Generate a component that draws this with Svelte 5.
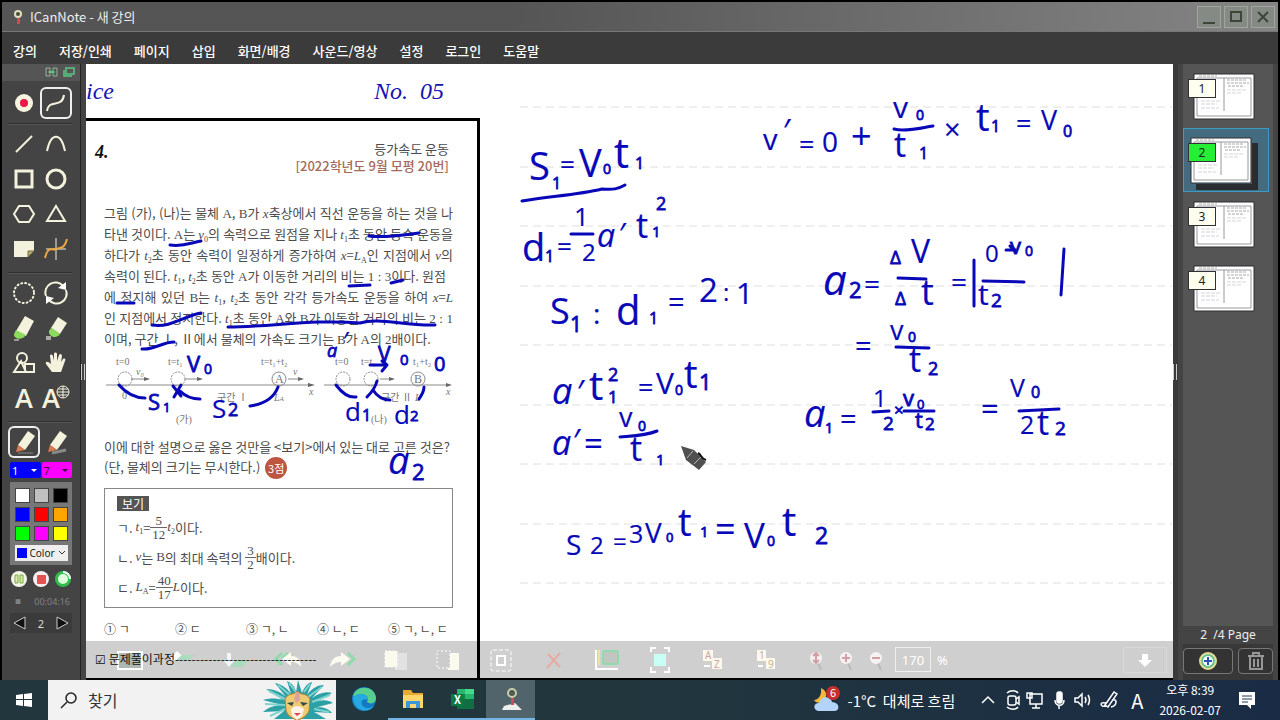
<script lang="ts">
  type Ink = [string, number, number, number];

  const menus = ["강의", "저장/인쇄", "페이지", "삽입", "화면/배경", "사운드/영상", "설정", "로그인", "도움말"];

  const cream = "#f4f2dc";

  const drawTools = [
    { label: "직선", art: `<path d="M8 24 24 8"/>` },
    { label: "곡선", art: `<path d="M7 23C11 4 21 4 25 23"/>` },
    { label: "사각형", art: `<path d="M8 8H24V24H8Z" stroke-width="3"/>` },
    { label: "원", art: `<circle cx="16" cy="16" r="9" stroke-width="3"/>` },
    { label: "육각형", art: `<path d="M11 8H21L26 16 21 24H11L6 16Z"/>` },
    { label: "삼각형", art: `<path d="M16 8 25 23H7Z"/>` },
    { label: "메모", art: `<path d="M6 8H26V18L20 24H6Z" fill="${cream}" stroke="none"/><path d="M20 24V18H26Z" fill="#b9ab6a" stroke="#716b45" stroke-width="1"/>` },
    { label: "그래프", art: `<path d="M6 16H26M16 5V27" stroke-width="1"/><path d="M5 25C8 12 12 18 16 16S24 17 27 6" stroke="#eda73f"/>` }
  ];

  const editTools = [
    { label: "영역 선택", art: `<circle cx="16" cy="16" r="10" stroke-width="2" stroke-dasharray="1 3" stroke-linecap="round"/>` },
    { label: "회전", art: `<path d="M6 19A10 10 0 0 1 23 9M26 13A10 10 0 0 1 9 23"/><path d="M18 11 26 13 26 5ZM14 21 6 19 6 27Z" fill="#fff" stroke="none"/>` },
    { label: "지우개", art: `<path d="M17 4 26 9 18 24 8 19Z" fill="${cream}" stroke="none"/><path d="M8 18 18 23C13 30 5 26 6 22Z" fill="#8bdc5b" stroke="none"/><path d="M6 28H11" stroke-width="1"/>` },
    { label: "부분 지우개", art: `<path d="M18 5 27 11 20 22 11 16Z" fill="${cream}" stroke="none"/><path d="M11 16 20 22C16 28 8 24 9 19Z" fill="#8bdc5b" stroke="none"/><path d="M6 24H11V28H6Z" fill="#aaa" stroke="none"/>` },
    { label: "도형", art: `<circle cx="14" cy="11" r="5"/><path d="M6 25 13 14 18 25ZM17 17H26V25H17Z"/>` },
    { label: "손", art: `<path d="M12 25 6 17C5 14 8 14 11 17L10 9C10 7 12 7 13 9L14 14 14 7C14 5 17 5 17 7V14L19 8C20 6 22 7 22 9L21 15 23 12C25 11 26 12 25 14L21 25Z" fill="${cream}" stroke="none"/>` }
  ];

  const swatches = ["#ffffff", "#c0c0c0", "#000000", "#0000ff", "#ff0000", "#ffa500", "#00ff00", "#ff00ff", "#ffff00"];

  const boardTools = [
    { label: "화면", art: `<path d="M4 8H28V25H4Z" fill="#aeb8b2" stroke="#fff" stroke-width="2"/>` },
    { label: "위로", art: `<path d="M4 13 10 7 16 13V16H4Z" fill="#fff"/><path d="M15 11H27L20 17H8Z" fill="#a9dcbc"/>` },
    { label: "아래로", art: `<path d="M7 9H11V17H14L9 23 4 17H7Z" fill="#f5f5f5"/><path d="M16 16H28L22 23H10Z" fill="#a9dcbc"/>` },
    { label: "실행 취소", art: `<path d="M9 9 3 15 9 21M15 9 9 15" fill="none" stroke="#8fdcaa" stroke-width="3"/><path d="M9 15 18 8V12C25 12 28 16 28 23 25 19 22 18 18 18V22Z" fill="#fbfbf2"/>` },
    { label: "다시 실행", art: `<path d="M22 9 28 15 22 21" fill="none" stroke="#8fdcaa" stroke-width="3"/><path d="M24 15 15 8V12C8 12 5 16 4 23 8 19 11 18 15 18V22Z" fill="#fbfbf2"/>` },
    { label: "앞으로", art: `<path d="M16 9H28V26H16Z" fill="#e2e2e2"/><path d="M6 7H18V23H6Z" fill="#fafaed" stroke="#fff" stroke-dasharray="2 2"/>` },
    { label: "뒤로", art: `<path d="M16 9H27V26H16Z" fill="#fafaed"/><path d="M5 7H18V24H5Z" fill="#ccc" stroke="#fff" stroke-dasharray="2 2"/>` },
    { label: "선택", art: `<rect x="6" y="6" width="20" height="21" rx="2" fill="none" stroke="#fff" stroke-dasharray="4 2"/><path d="M12 12H20V21H12Z" fill="none" stroke="#fff" stroke-width="2"/>` },
    { label: "삭제", art: `<path d="M10 10 22 23M22 9 9 24" stroke="#e8aaa2" stroke-width="2"/>` },
    { label: "배열", art: `<path d="M5 6V25H27" fill="none" stroke="#fff" stroke-width="2"/><path d="M8 6V21" stroke="#f2dfa5" stroke-width="2"/><rect x="12" y="7" width="15" height="13" rx="2" fill="#c1c6c2" stroke="#8fdcaa" stroke-width="2"/>` },
    { label: "맞춤", art: `<path d="M7 8V4H12M20 4H25V8M25 23V28H20M12 28H7V23" fill="none" stroke="#fff" stroke-width="2"/><path d="M10 10H22V22H10Z" fill="#c9fff5"/>` },
    { label: "글자 순서", art: `<path d="M6 6H16V17H6ZM15 14H25V25H15Z" fill="#fff9ed"/><text x="8" y="15" font-size="10" fill="#c9a6a6">A</text><text x="17" y="24" font-size="10" fill="#c9a6a6">Z</text><path d="M7 22H13" stroke="#fff" stroke-width="2"/>` },
    { label: "숫자 순서", art: `<path d="M7 6H16V17H7ZM16 14H25V25H16Z" fill="#fff9ed"/><text x="9" y="15" font-size="10" fill="#bbb39b">1</text><text x="18" y="24" font-size="10" fill="#bbb39b">9</text><path d="M8 22H13" stroke="#fff" stroke-width="2"/>` }
  ];

  const zoomTools = [
    { label: "높이 맞춤", mark: "M15 9V19M12 12 15 9 18 12M12 16 15 19 18 16" },
    { label: "확대", mark: "M11 14H19M15 10V18" },
    { label: "축소", mark: "M11 14H19" }
  ];

  const pages = [1, 2, 3, 4];
  let current = $state(2);

  const rules = [107, 167, 226, 286, 345, 405, 464, 524, 583, 643];

  // Each entry is text, left edge, baseline and size on the board.
  const notes: Ink[] = [
    ["S", 529, 180, 38], ["1", 552, 189, 16], ["=", 560, 174, 26], ["V", 579, 177, 38], ["0", 603, 174, 14], ["t", 614, 168, 42], ["1", 635, 169, 16],
    ["d", 522, 261, 38], ["1", 545, 262, 16], ["=", 557, 256, 26], ["1", 574, 226, 26], ["2", 582, 261, 24], ["a", 597, 247, 32], ["′", 618, 244, 30], ["t", 636, 238, 34], ["1", 652, 237, 15], ["2", 656, 210, 18],
    ["S", 550, 324, 36], ["1", 570, 332, 21], [":", 593, 324, 28], ["d", 616, 325, 40], ["1", 649, 324, 16], ["=", 668, 312, 29], ["2", 699, 302, 33], [":", 723, 301, 24], ["1", 736, 304, 30],
    ["a", 552, 404, 36], ["′", 576, 404, 32], ["t", 589, 400, 40], ["1", 608, 403, 17], ["2", 608, 381, 18], ["=", 638, 397, 27], ["V", 656, 394, 30], ["0", 675, 395, 14], ["t", 684, 388, 38], ["1", 699, 390, 22],
    ["a", 552, 455, 34], ["′", 572, 453, 32], ["=", 584, 455, 33], ["v", 619, 427, 27], ["0", 638, 431, 14], ["t", 630, 461, 34], ["1", 656, 465, 15],
    ["S", 566, 555, 28], ["2", 590, 554, 24], ["=", 613, 550, 24], ["3", 629, 543, 25], ["V", 645, 543, 28], ["0", 666, 542, 13], ["t", 678, 536, 38], ["1", 700, 537, 15], ["=", 715, 542, 36], ["V", 744, 548, 35], ["0", 767, 546, 14], ["t", 782, 536, 40], ["2", 815, 544, 23],
    ["v", 763, 150, 29], ["′", 782, 143, 32], ["=", 799, 154, 27], ["0", 822, 152, 28], ["+", 851, 149, 36], ["v", 893, 118, 30], ["0", 916, 120, 14], ["t", 894, 157, 34], ["1", 919, 159, 16], ["×", 944, 140, 29], ["t", 976, 131, 38], ["1", 991, 132, 16], ["=", 1016, 133, 27], ["V", 1041, 130, 27], ["0", 1063, 137, 16],
    ["a", 823, 295, 42], ["2", 849, 298, 22], ["=", 864, 294, 28], ["Δ", 890, 264, 19], ["V", 911, 263, 32], ["Δ", 895, 305, 19], ["t", 921, 305, 36], ["=", 951, 292, 28], ["0", 985, 262, 24], ["v", 1010, 254, 22], ["0", 1025, 256, 14], ["t", 978, 305, 30], ["2", 991, 307, 19],
    ["=", 855, 356, 29], ["v", 890, 340, 27], ["0", 908, 342, 14], ["t", 909, 372, 34], ["2", 928, 375, 18],
    ["a", 804, 427, 38], ["1", 825, 433, 14], ["=", 840, 429, 29], ["1", 873, 407, 24], ["2", 883, 430, 19], ["×", 894, 416, 17], ["v", 903, 406, 22], ["0", 917, 409, 13], ["t", 915, 428, 22], ["2", 925, 430, 17],
    ["=", 981, 420, 31], ["V", 1010, 397, 25], ["0", 1031, 398, 16], ["2", 1020, 434, 25], ["t", 1037, 435, 34], ["2", 1055, 435, 19],
    ["V", 187, 372, 22], ["0", 204, 374, 14], ["S", 148, 410, 22], ["1", 163, 412, 13], ["S", 212, 418, 26], ["2", 228, 416, 18],
    ["a", 327, 357, 18], ["′", 342, 350, 26], ["V", 378, 362, 21], ["0", 400, 365, 15], ["0", 434, 371, 20], ["d", 345, 421, 26], ["1", 362, 421, 16], ["d", 394, 424, 26], ["2", 410, 421, 15], ["a", 388, 474, 38], ["2", 412, 480, 22]
  ];

  const strokes = [
    "M522 201C552 196 577 195 602 189 613 190 618 189 625 185",
    "M571 234H593", "M620 437C632 436 645 436 657 431", "M894 129C906 132 920 128 933 126",
    "M898 278 926 279", "M974 260V306", "M983 281 1024 282", "M1064 249 1061 295", "M1006 250H1014M1010 246 1015 250",
    "M896 347 929 348", "M873 412 889 411", "M904 411H934", "M1019 411 1059 409",
    "M170 245C183 247 190 243 201 241", "M369 236C387 238 402 235 419 233", "M349 286 370 285", "M391 283 403 280",
    "M117 303 134 303", "M152 325C171 328 184 316 201 313", "M228 327C270 327 315 319 360 323 379 317 404 326 435 325", "M142 349C155 350 162 342 174 342",
    "M119 385C126 393 135 398 145 398", "M173 386 181 396M181 385 174 397M180 391C186 397 193 399 200 399", "M250 406C264 404 274 398 278 387",
    "M370 365H386M382 361 387 365 382 371", "M336 385C342 393 348 398 356 397", "M377 381C375 389 371 393 367 397M373 390C378 398 384 400 390 400", "M424 387C424 392 421 396 419 399"
  ];
</script>

<div class="window">
  <header class="titlebar">
    <svg width="12" height="16" viewBox="0 0 12 16"><circle cx="6" cy="5" r="3" fill="#454b35" stroke="#dedfbd" stroke-width="2" /><path d="M5 9H8V15H5Z" fill="#d44a4f" /></svg>
    <h1>ICanNote - 새 강의</h1>
    <div class="titlebar__buttons">
      <button type="button" aria-label="최소화"><svg width="16" height="16"><path d="M2 14H14" /></svg></button>
      <button type="button" aria-label="최대화"><svg width="16" height="16"><path d="M3 3H13V12H3Z" /></svg></button>
      <button type="button" aria-label="닫기"><svg width="16" height="16"><path d="M3 3 13 13M13 3 3 13" /></svg></button>
    </div>
  </header>

  <nav class="menubar">
    {#each menus as menu}
      <button type="button">{menu}</button>
    {/each}
  </nav>

  <main class="workspace">
    <aside class="tools">
      <div class="tools__head">
        <svg width="30" height="12" fill="none" stroke="#58c783"><path d="M1 2H5V10H1ZM8 2H12V10H8ZM3 6H10" stroke="#8eb79a" /><path d="M4 6H9" stroke-width="2" /><path d="M21 2H29V8H21ZM19 4V10H27" stroke-width="1.5" /></svg>
      </div>
      <div class="tools__body">
        <div class="tools__grid">
          <button type="button" aria-label="녹화"><svg width="32" height="32"><circle cx="16" cy="16" r="9" fill="#f7f4df" /><circle cx="16" cy="16" r="4" fill="#ea1748" /></svg></button>
          <button type="button" class="framed" aria-label="자유 곡선"><svg width="32" height="32" fill="none" stroke={cream} stroke-width="2"><path d="M7 24C9 11 22 22 24 8" /></svg></button>
        </div>
        <hr />
        <div class="tools__grid tools__grid--draw">
          {#each drawTools as tool}
            <button type="button" aria-label={tool.label}><svg width="32" height="32" fill="none" stroke={cream} stroke-width="2">{@html tool.art}</svg></button>
          {/each}
        </div>
        <hr />
        <div class="tools__grid tools__grid--draw">
          {#each editTools as tool}
            <button type="button" aria-label={tool.label}><svg width="32" height="32" fill="none" stroke={cream} stroke-width="2">{@html tool.art}</svg></button>
          {/each}
          <button type="button" class="letter" aria-label="글자">A</button>
          <button type="button" class="letter letter--web" aria-label="웹 글자">A<svg width="14" height="14" fill="#444" stroke={cream}><circle cx="7" cy="7" r="6" /><path d="M1 7H13M2 4H12M2 10H12M7 1V13" /></svg></button>
        </div>
        <hr />
        <div class="tools__grid">
          {#each ["펜", "형광펜"] as pen, i}
            <button type="button" class:framed={i === 0} aria-label={pen}><svg width="32" height="32"><path d="M20 5 27 10 17 24 10 19Z" fill={cream} /><path d="M10 19 17 24 8 26Z" fill="#dc7950" /><path d={i === 0 ? "M10 27H25" : "M12 27 26 24"} stroke="#888" stroke-width={i === 0 ? 1 : 3} /></svg></button>
          {/each}
        </div>
        <div class="widths">
          <label class="widths__pen"><select aria-label="펜 굵기"><option>1</option></select></label>
          <label class="widths__marker"><select aria-label="형광펜 굵기"><option>7</option></select></label>
        </div>
        <div class="palette">
          {#each swatches as color}
            <button type="button" aria-label={color} style:background={color}></button>
          {/each}
          <label class="palette__more"><span></span><select aria-label="Color"><option>Color</option></select><svg width="8" height="8" fill="none" stroke="#333"><path d="M1 2 4 5 7 2" /></svg></label>
        </div>
        <div class="record">
          <button type="button" aria-label="일시 정지"><svg width="18" height="18"><circle cx="9" cy="9" r="8" fill="#f4f5e9" /><path d="M5 5H8V13H5ZM10 5H13V13H10Z" fill="#d7efaa" stroke="#7caa42" /></svg></button>
          <button type="button" aria-label="정지"><svg width="18" height="18"><circle cx="9" cy="9" r="8" fill="#f8eeee" /><rect x="5" y="5" width="9" height="9" rx="1" fill="#e5534e" /></svg></button>
          <button type="button" aria-label="상태"><svg width="18" height="18"><circle cx="9" cy="9" r="8" fill="#31bd4d" /><circle cx="9" cy="9" r="5" fill="#dfffdc" /><path d="M9 2A7 7 0 0 1 16 9" stroke="#fff" stroke-width="2" fill="none" /></svg></button>
        </div>
        <div class="timer"><span>■</span><time>00:04:16</time></div>
        <div class="pager">
          <button type="button" aria-label="이전 페이지" onclick={() => (current = Math.max(1, current - 1))}><svg width="14" height="14"><path d="M12 1V13L1 7Z" /></svg></button>
          <span>{current}</span>
          <button type="button" aria-label="다음 페이지" onclick={() => (current = Math.min(4, current + 1))}><svg width="14" height="14"><path d="M2 1V13L13 7Z" /></svg></button>
        </div>
      </div>
    </aside>
    <div class="splitter"><i></i></div>

    <section class="board">
      <svg class="guides" width="100%" height="100%">
        <g transform="translate(-86 -64)" stroke="#dededb" stroke-dasharray="8 5">
          {#each rules as y}
            <line x1="520" x2="1172" y1={y} y2={y} />
          {/each}
        </g>
      </svg>

      <div class="board__bar">
        {#each boardTools as tool}
          <button type="button" class="slot" aria-label={tool.label}><svg width="32" height="32">{@html tool.art}</svg></button>
        {/each}
        <div class="zoom">
          {#each zoomTools as tool}
            <button type="button" aria-label={tool.label}><svg width="30" height="32"><path d="M17 19 20 26" stroke="#bbb" stroke-width="2" /><circle cx="15" cy="14" r="6" fill="#f6f2f2" /><path d={tool.mark} fill="none" stroke="#d29fa5" stroke-width="2" /></svg></button>
          {/each}
          <input aria-label="배율" value="170" /><span>%</span>
        </div>
        <button type="button" class="down" aria-label="도구 모음 숨기기"><svg width="16" height="16"><path d="M5 2H11V8H15L8 15 1 8H5Z" fill="#fff" /></svg></button>
      </div>

      <article class="paper">
        <div class="paper__head"><span>ice</span><span>No.&nbsp; 05</span></div>
        <div class="problem">
          <div class="problem__head">
            <b>4.</b>
            <p>등가속도 운동<strong>[2022학년도 9월 모평 20번]</strong></p>
          </div>
          <div class="passage">
            <p>그림 (가), (나)는 물체 <u>A</u>, <u>B</u>가 <i>x</i>축상에서 직선 운동을 하는 것을 나</p>
            <p>타낸 것이다. <u>A</u>는 <i>v</i><sub>0</sub>의 속력으로 원점을 지나 <i>t</i><sub>1</sub>초 동안 등속 운동을</p>
            <p>하다가 <i>t</i><sub>2</sub>초 동안 속력이 일정하게 증가하여 <i>x</i>=<i>L</i><sub>A</sub>인 지점에서 <i>v</i>의</p>
            <p class="nearly">속력이 된다. <i>t</i><sub>1</sub>, <i>t</i><sub>2</sub>초 동안 <u>A</u>가 이동한 거리의 비는 <u>1 : 3</u>이다. 원점</p>
            <p>에 정지해 있던 <u>B</u>는 <i>t</i><sub>1</sub>, <i>t</i><sub>2</sub>초 동안 각각 등가속도 운동을 하여 <i>x</i>=<i>L</i></p>
            <p>인 지점에서 정지한다. <i>t</i><sub>1</sub>초 동안 <u>A</u>와 <u>B</u>가 이동한 거리의 비는 <u>2 : 1</u></p>
            <p class="last">이며, 구간 <u>Ⅰ</u>, <u>Ⅱ</u>에서 물체의 가속도 크기는 <u>B</u>가 <u>A</u>의 <u>2</u>배이다.</p>
          </div>

          <svg class="figure" width="349" height="76" viewBox="104 354 349 76">
            <g fill="none" stroke="#8a8a8a">
              <path d="M106 386H312M324 386H449M131 380H148M185 380H201M288 380H302M380 380H393" />
              <circle cx="279" cy="380" r="7" /><circle cx="418" cy="380" r="7" />
              <g stroke-dasharray="2 1"><circle cx="125" cy="380" r="7" /><circle cx="178" cy="380" r="7" /><circle cx="343" cy="380" r="7" /><circle cx="371" cy="380" r="7" /></g>
            </g>
            <path d="M144 378 150 380 144 382ZM197 378 203 380 197 382ZM298 378 304 380 298 382ZM389 378 395 380 389 382ZM308 384 315 386 308 388ZM446 384 452 386 446 388Z" fill="#666" />
            <g class="figure__text">
              <text x="116" y="366">t=0</text><text x="168" y="366">t=t₁</text><text x="261" y="366">t=t₁+t₂</text>
              <text x="335" y="366">t=0</text><text x="361" y="366">t=t₁</text><text x="413" y="366">t₁+t₂</text>
              <text x="136" y="376" class="it">v₀</text><text x="293" y="376" class="it">v</text><text x="309" y="396" class="it">x</text><text x="446" y="396" class="it">x</text>
              <text x="122" y="400">0</text><text x="217" y="402">구간 Ⅰ</text><text x="274" y="402" class="it">L<tspan font-size="7">A</tspan></text>
              <text x="381" y="402">구간 Ⅱ</text><text x="415" y="402" class="it">L</text><text x="275" y="384" font-size="12">A</text><text x="414" y="384" font-size="12">B</text>
              <text x="176" y="424">(가)</text><text x="371" y="424">(나)</text>
            </g>
          </svg>

          <div class="question">
            <p>이에 대한 설명으로 옳은 것만을 &lt;보기&gt;에서 있는 대로 고른 것은?</p>
            <p>(단, 물체의 크기는 무시한다.) <span>3점</span></p>
          </div>

          <div class="choices">
            <h2>보기</h2>
            <p>ㄱ. <i>t</i><sub>1</sub>=<span class="frac"><span>5</span><span>12</span></span><i>t</i><sub>2</sub>이다.</p>
            <p>ㄴ. <i>v</i>는 <u>B</u>의 최대 속력의 <span class="frac"><span>3</span><span>2</span></span>배이다.</p>
            <p>ㄷ. <i>L</i><sub>A</sub>=<span class="frac"><span>40</span><span>17</span></span><i>L</i>이다.</p>
          </div>
          <div class="answers"><span>① ㄱ</span><span>② ㄷ</span><span>③ ㄱ, ㄴ</span><span>④ ㄴ, ㄷ</span><span>⑤ ㄱ, ㄴ, ㄷ</span></div>
          <p class="process">☑ 문제풀이과정----------------------------------</p>
        </div>
      </article>

      <svg class="ink" width="100%" height="100%">
        <g transform="translate(-86 -64)">
          {#each strokes as d}
            <path class="stroke" {d} />
          {/each}
          {#each notes as [text, x, y, size]}
            <text {x} {y} font-size={size} class:slanted={text === "a" || text === "′"} class:small={size < 24}>{text}</text>
          {/each}
          <path d="M681 446 694 450 706 462 699 470 686 460Z" fill="#505050" />
          <path d="M687 458 693 451M694 464 701 457" stroke="#bbb" />
          <path d="M698 453C702 455 700 458 706 460" fill="none" stroke="#111" stroke-width="2" />
        </g>
      </svg>
    </section>

    <div class="splitter splitter--right"><i></i></div>
    <aside class="pages">
      <div class="pages__list">
        {#each pages as page}
          <button type="button" class="page" class:current={page === current} aria-label={`${page} 페이지`} onclick={() => (current = page)}>
            <svg width="62" height="47" fill="none">
              <path d="M1 1H61V46H1Z" fill="#fff" stroke="#2e2e35" />
              <path d="M4 5H58M4 5V43H58V5M31 5V38" stroke="#98989c" />
              <path d="M6 3H24M34 7H54M34 10H56M35 13H50" stroke="#aaa" stroke-dasharray="3 1" />
              <path d="M8 28H27M8 31H24M34 17H54M34 20H48M8 35H26" stroke="#d5d5da" stroke-dasharray="4 1" />
            </svg>
            <span>{page}</span>
          </button>
        {/each}
      </div>
      <p>{current}&nbsp; /4 Page</p>
      <div class="pages__actions">
        <button type="button" aria-label="페이지 추가"><svg width="22" height="22"><circle cx="11" cy="11" r="8" fill="#fff" stroke="#e5db91" stroke-width="2" /><circle cx="11" cy="11" r="6" fill="none" stroke="#68c28a" stroke-width="2" /><path d="M7 11H15M11 7V15" stroke="#2753b6" stroke-width="2" /></svg></button>
        <button type="button" aria-label="페이지 삭제"><svg width="22" height="22" fill="none" stroke="#969696" stroke-width="2"><path d="M3 6H19M8 6V3H14V6M5 7V19H17V7M9 9V17M13 9V17" /></svg></button>
      </div>
    </aside>
  </main>

  <footer class="taskbar">
    <button type="button" class="start" aria-label="시작"><svg width="18" height="18" fill="#fff"><path d="M1 4 8 3V8H1ZM9 3 17 2V8H9ZM1 9H8V15L1 14ZM9 9H17V16L9 15Z" /></svg></button>
    <label class="search">
      <svg width="18" height="18" fill="none" stroke="#222" stroke-width="1.5"><circle cx="11" cy="7" r="5" /><path d="M7 11 1 17" /></svg>
      <input placeholder="찾기" aria-label="찾기" />
      <svg width="72" height="40">
        <path d="M22 31 1 32C7 27 13 25 20 25L1 20C8 18 14 18 21 20L4 9C12 9 19 12 24 17L13 3C21 5 26 9 29 14L25 1C30 3 34 8 34 13L36 0 40 13C42 7 46 3 50 2L45 15C50 8 56 5 62 5L50 18C57 13 64 11 70 13L52 23C59 19 66 20 71 23L52 28C60 26 67 29 70 33L52 32 64 39H12Z" fill="#2ba0a5" />
        <path d="M23 25 3 24M25 20 7 11M29 16 16 5M34 12 27 3M42 12 48 4M46 17 60 7M50 22 68 15M52 29 67 32M23 29 8 36" stroke="#80d4cf" stroke-width="2" />
        <path d="M23 19C27 12 31 16 35 11 39 16 44 12 48 19L47 31C45 35 41 39 35 40 29 38 25 35 24 30Z" fill="#eeca71" stroke="#b97d34" />
        <path d="M29 29C33 25 38 25 42 29L40 36 35 40 30 36Z" fill="#fff2e8" /><path d="M25 23 32 22 30 26ZM46 23 38 22 41 26Z" fill="#314a49" /><path d="M32 33H39L35 36Z" fill="#d34a48" /><path d="M34 12 37 12 38 20 35 23 32 20Z" fill="#dda19d" />
      </svg>
    </label>
    <div class="apps">
      <button type="button" aria-label="Edge"><svg width="26" height="26"><circle cx="13" cy="13" r="12" fill="#1479c5" /><path d="M2 11C3-1 24-2 25 12 25 17 20 19 16 16 20 10 11 5 2 11Z" fill="#57d08d" /><path d="M2 11C9 5 18 9 17 14 11 11 8 17 13 21 16 23 20 22 23 20 18 28 2 26 2 11Z" fill="#25a9df" /></svg></button>
      <button type="button" class="open" aria-label="탐색기"><svg width="26" height="26"><path d="M3 4H11L13 7H23V22H3Z" fill="#e6aa2e" /><path d="M3 9H23V22H3Z" fill="#ffd66b" /><path d="M6 22V15H20V22H16V18H10V22Z" fill="#3d96d9" /></svg></button>
      <button type="button" class="open" aria-label="Excel"><svg width="26" height="26"><path d="M8 3H25V23H8Z" fill="#27b66e" /><path d="M16 3H25V8H16Z" fill="#44d98d" /><path d="M8 8H16V13H8Z" fill="#168347" /><path d="M8 13H25V23H8Z" fill="#106f43" /><path d="M2 8H14V20H2Z" fill="#0c7842" /><text x="5" y="18" font-size="11" font-weight="700" fill="#fff">X</text></svg></button>
      <button type="button" class="open active" aria-label="ICanNote"><svg width="26" height="26"><path d="M6 20 17 17 24 24H4Z" fill="#eef0ed" /><circle cx="14" cy="7" r="4" fill="#4e5d54" stroke="#c9cda9" stroke-width="2" /><path d="M13 12H16V19H13Z" fill="#cb4b61" /></svg></button>
    </div>
    <div class="tray">
      <svg width="28" height="30"><path d="M8 3C9 11 5 15 1 15 4 20 14 18 13 9 13 6 10 4 8 3Z" fill="#f4b83b" /><path d="M5 26C0 25 0 18 6 18 8 10 18 11 19 17 27 17 27 26 22 26Z" fill="#b4d3f8" /><circle cx="20" cy="8" r="7" fill="#c62f2c" /><text x="17" y="12" font-size="11" fill="#fff">6</text></svg>
      <span class="weather">-1°C &nbsp;대체로 흐림</span>
      <svg class="tray__icons" width="140" height="24" fill="none" stroke="#fff" stroke-width="1.5">
        <path d="M4 15 10 9 16 15" />
        <path d="M29 5C32 2 38 2 40 5M29 19C32 22 38 22 40 19" /><rect x="30" y="8" width="8" height="9" rx="2" /><path d="M38 11 41 9V16L38 14" />
        <path d="M52 6H64V16H52ZM58 16V20M54 20H62M49 5H54V10H49Z" />
        <rect x="79" y="4" width="5" height="11" rx="2" fill="#fff" /><path d="M77 12C77 19 86 19 86 12M81 17V21" />
        <path d="M97 10H100L104 6V18L100 14H97ZM107 9Q109 12 107 15M110 7Q113 12 110 17" />
        <path d="M127 17 136 4 139 6 130 19ZM128 15C121 13 122 20 128 18M134 12C140 10 139 18 133 19" />
      </svg>
      <span class="lang">A</span>
      <time>오후 8:39<br />2026-02-07</time>
      <svg width="20" height="20"><path d="M2 2H18V15H14V19L10 15H2Z" fill="#fff" /><path d="M5 6H15M5 9H15M5 12H11" stroke="#213b4c" /></svg>
    </div>
  </footer>
</div>

<style>
  :global(body) {
    background: #000;
  }

  .window {
    box-sizing: border-box;
    display: flex;
    flex-direction: column;
    min-height: 100vh;
    padding-top: 2px;
    font-family: "Noto Sans", "Noto Sans CJK KR", sans-serif;
    font-size: 13px;
  }

  button,
  input,
  select {
    border: 0;
    border-radius: 0;
    background: none;
    color: inherit;
    font: inherit;
    padding: 0;
  }

  select {
    appearance: none;
  }

  svg {
    display: block;
    flex: none;
  }

  p,
  h1,
  h2 {
    margin: 0;
    font-size: inherit;
    font-weight: 400;
  }

  .titlebar {
    display: flex;
    align-items: center;
    gap: 6px;
    height: 29px;
    margin: 0 2px;
    padding: 0 3px 0 10px;
    background: linear-gradient(90deg, #555 40%, #858585);
    border-bottom: 1px solid #777;
    color: #eee;
    font-family: "Noto Sans CJK KR", sans-serif;
  }

  .titlebar__buttons {
    display: flex;
    gap: 3px;
    margin-left: auto;
  }

  .titlebar__buttons button {
    display: grid;
    place-items: center;
    width: 24px;
    height: 22px;
    border: 1px solid #a0a69f;
    background: #858b84;
  }

  .titlebar__buttons path {
    fill: none;
    stroke: #3c4638;
    stroke-width: 2;
  }

  .menubar {
    display: flex;
    align-items: center;
    gap: 22px;
    height: 32px;
    margin: 0 2px;
    padding: 6px 11px 0;
    box-sizing: border-box;
    background: #3b3b3b;
    color: #fff;
    font-family: "Noto Sans CJK KR", sans-serif;
    font-weight: 500;
    line-height: 20px;
  }

  .workspace {
    display: flex;
    flex: 1;
    margin: 0 2px;
  }

  .tools {
    width: 78px;
    background: #444;
    color: #ddd;
  }

  .tools__head {
    display: flex;
    justify-content: flex-end;
    height: 17px;
    padding: 2px 5px 0 0;
    box-sizing: border-box;
    background: #555;
  }

  .tools__body {
    padding: 6px 8px 0 6px;
  }

  .tools__grid {
    display: grid;
    grid-template-columns: 32px 32px;
  }

  .tools__grid--draw {
    grid-auto-rows: 35px;
  }

  .tools__grid button {
    height: 32px;
  }

  .tools .framed {
    border-radius: 6px;
    box-shadow: inset 0 0 0 2px #eee;
  }

  .tools hr {
    margin: 4px 0 3px;
    border: 0;
    border-top: 1px solid #303030;
    border-bottom: 1px solid #555;
  }

  .tools .letter {
    display: flex;
    align-items: center;
    justify-content: center;
    color: #f4f2dc;
    font-family: "Open Sans", sans-serif;
    font-size: 27px;
    font-weight: 600;
    line-height: 32px;
  }

  .letter--web svg {
    align-self: flex-start;
    margin: 3px 0 0 -4px;
  }

  .widths {
    display: grid;
    grid-template-columns: 1fr 1fr;
    gap: 1px;
    margin: 4px 0 0 2px;
    font-size: 11px;
  }

  .widths label {
    display: flex;
    align-items: center;
    height: 16px;
    padding: 0 4px 0 2px;
    border-radius: 2px;
  }

  .widths label::after {
    content: "";
    border: 3px solid transparent;
    border-top-color: currentColor;
    border-bottom: 0;
  }

  .widths select {
    flex: 1;
    min-width: 0;
  }

  .widths__pen {
    background: #00f;
    color: #fff;
  }

  .widths__marker {
    background: #f0f;
    color: #401040;
  }

  .palette {
    display: grid;
    grid-template-columns: repeat(3, 15px);
    grid-auto-rows: 15px;
    gap: 4px;
    justify-content: center;
    margin: 4px 0 0 2px;
    padding: 6px 3px 5px;
    background: #777;
  }

  .palette button {
    border: 1px solid #444;
  }

  .palette__more {
    display: flex;
    grid-column: 1 / -1;
    align-items: center;
    gap: 3px;
    height: 16px;
    padding: 0 2px;
    background: #eee;
    color: #222;
    font-size: 10px;
  }

  .palette__more span {
    flex: none;
    width: 10px;
    height: 10px;
    background: #00f;
  }

  .palette__more select {
    min-width: 0;
    flex: 1;
    margin-right: -3px;
  }

  .record {
    display: flex;
    justify-content: space-between;
    margin: 5px 0 0 2px;
  }

  .timer {
    display: flex;
    justify-content: space-between;
    margin: 6px 2px 0 7px;
    color: #7b8388;
    font-size: 9px;
    line-height: 16px;
  }

  .timer span {
    font-size: 6px;
  }

  .pager {
    display: flex;
    align-items: center;
    justify-content: space-between;
    height: 20px;
    margin: 3px 0 0 2px;
    padding: 0 3px;
    background: #3b3b3b;
    font-size: 11px;
  }

  .pager path {
    fill: #111;
    stroke: #ccc;
  }

  .splitter {
    display: grid;
    place-items: center;
    width: 6px;
    background: #444;
    box-shadow: inset 1px 0 #222;
  }

  .splitter i {
    width: 2px;
    height: 16px;
    border: solid #ccc;
    border-width: 0 1px;
  }

  .splitter--right {
    justify-items: start;
    width: 10px;
    box-shadow: inset 5px 0 #3a3a3a;
  }

  .board {
    position: relative;
    flex: 1;
    min-width: 0;
    background: #fff;
    overflow: hidden;
    border-bottom: 2px solid #000;
  }

  .guides,
  .ink {
    position: absolute;
    inset: 0;
    pointer-events: none;
  }

  .ink .stroke {
    fill: none;
    stroke: #0808b8;
    stroke-width: 3;
    stroke-linecap: round;
    stroke-linejoin: round;
  }

  .ink text {
    fill: #0808b8;
    stroke: #0808b8;
    stroke-width: 0.2;
    stroke-linejoin: round;
    font-family: "Open Sans", sans-serif;
  }

  .ink .small {
    stroke-width: 0.8;
  }

  .ink .slanted {
    font-style: italic;
  }

  .board__bar {
    position: absolute;
    inset: auto 0 0;
    display: flex;
    align-items: center;
    height: 37px;
    padding: 0 6px 0 17px;
    background: #cfcfcf;
    color: #fff;
  }

  .slot {
    display: grid;
    place-items: center;
    width: 53px;
  }

  .zoom {
    display: flex;
    align-items: center;
    margin-left: 9px;
  }

  .zoom input {
    width: 36px;
    height: 25px;
    margin: 0 6px 0 4px;
    box-sizing: border-box;
    border: 1px solid #eee;
    text-align: center;
  }

  .down {
    display: grid;
    place-items: center;
    width: 44px;
    height: 26px;
    margin-left: auto;
    border: 1px solid #d8d8d8;
  }

  .paper {
    position: relative;
    display: flex;
    flex-direction: column;
    width: 394px;
    height: 100%;
    pointer-events: none;
    color: #4c4c4c;
    font-family: "Noto Sans CJK KR", sans-serif;
  }

  .paper__head {
    display: flex;
    justify-content: space-between;
    height: 54px;
    padding-right: 36px;
    color: #1414b4;
    font: italic 24px/54px "Liberation Serif", serif;
  }

  .problem {
    flex: 1;
    padding: 19px 24px 0 18px;
    border-top: 3px solid #000;
    border-right: 3px solid #000;
  }

  .problem__head {
    display: flex;
    justify-content: space-between;
    height: 62px;
    margin-left: -9px;
    padding-right: 4px;
    text-align: right;
    line-height: 17px;
  }

  .problem__head b {
    color: #111;
    font: italic 700 18px/24px "Liberation Serif", serif;
  }

  .problem__head strong {
    display: block;
    color: #a46b5c;
    font-weight: 500;
  }

  .passage p {
    height: 21px;
    white-space: nowrap;
    line-height: 21px;
    text-align-last: justify;
  }

  .passage .nearly {
    padding-right: 7px;
  }

  .passage .last {
    padding-right: 26px;
  }

  i,
  u,
  sub {
    font-family: "Liberation Serif", "Noto Sans CJK KR", serif;
    text-decoration: none;
  }

  sub {
    font-size: 8px;
    line-height: 1px;
    vertical-align: -3px;
  }

  .figure {
    margin-top: 4px;
  }

  .figure__text {
    fill: #777;
    font-family: "Liberation Serif", "Noto Sans CJK KR", serif;
    font-size: 10px;
  }

  .it {
    font-style: italic;
  }

  .question {
    margin-top: 8px;
    line-height: 20px;
    white-space: nowrap;
  }

  .question p {
    height: 20px;
  }

  .question p:first-child {
    margin-right: 7px;
    text-align-last: justify;
  }

  .question span {
    display: inline-block;
    width: 22px;
    height: 22px;
    margin-left: 2px;
    border-radius: 50%;
    background: #bd5540;
    color: #fff;
    font-size: 11px;
    line-height: 22px;
    text-align: center;
    vertical-align: middle;
  }

  .choices {
    margin-top: 11px;
    padding: 7px 12px 5px;
    border: 1px solid #888;
  }

  .choices h2 {
    width: 32px;
    margin-bottom: 1px;
    background: #555;
    color: #fff;
    font-size: 12px;
    line-height: 15px;
    text-align: center;
  }

  .choices p {
    display: flex;
    align-items: center;
    height: 30px;
    white-space: pre;
  }

  .choices sub {
    align-self: center;
    margin-top: 8px;
  }

  .frac {
    display: inline-grid;
    font: 13px/13px "Liberation Serif", serif;
    text-align: center;
  }

  .frac span {
    padding: 0 2px;
  }

  .frac span:first-child {
    border-bottom: 1px solid #666;
  }

  .answers {
    display: grid;
    grid-template-columns: repeat(5, 71px);
    margin-top: 11px;
    font-size: 12px;
    line-height: 20px;
    white-space: nowrap;
  }

  .process {
    margin: 10px 0 0 -9px;
    color: #111;
    font-size: 12px;
    line-height: 20px;
    white-space: nowrap;
  }

  .pages {
    display: flex;
    flex-direction: column;
    width: 90px;
    border-right: 5px solid #444;
    background: #555;
    color: #eee;
  }

  .pages__list {
    flex: 1;
  }

  .page {
    position: relative;
    display: block;
    width: 86px;
    height: 64px;
    padding: 0 0 0 9px;
    border: 1px solid transparent;
  }

  .page.current {
    padding-left: 6px;
    border-color: #3c9bc4;
    background: #456b80;
  }

  .page.current svg {
    box-shadow: 6px 6px #292d30;
  }

  .page span {
    position: absolute;
    top: 14px;
    left: 4px;
    width: 26px;
    border: 1px solid #303035;
    background: #fffff0;
    color: #222;
    font-size: 12px;
    line-height: 17px;
  }

  .page.current span {
    background: #24ee36;
  }

  .pages > p {
    background: #444;
    font-size: 12px;
    line-height: 18px;
    text-align: center;
  }

  .pages__actions {
    display: flex;
    gap: 5px;
    padding: 4px 0 6px;
    background: #383838;
  }

  .pages__actions button {
    display: grid;
    place-items: center;
    width: 35px;
    height: 26px;
    border: 1px solid #777;
    border-radius: 4px;
    background: #333;
  }

  .pages__actions button:first-child {
    width: 50px;
  }

  .taskbar {
    display: flex;
    height: 40px;
    background: linear-gradient(90deg, #21363d 50%, #1a2b45);
    color: #fff;
    font-family: "Noto Sans CJK KR", sans-serif;
  }

  .start {
    display: grid;
    place-items: center;
    width: 48px;
  }

  .search {
    display: flex;
    align-items: center;
    width: 288px;
    box-sizing: border-box;
    padding: 0 2px 0 12px;
    background: #f2f2f2;
    color: #222;
    font-size: 16px;
  }

  .search input {
    flex: 1;
    min-width: 0;
    margin-left: 10px;
  }

  .search input::placeholder {
    color: #333;
  }

  .apps {
    display: flex;
    margin-left: 3px;
  }

  .apps button {
    display: grid;
    place-items: center;
    width: 49px;
    box-sizing: border-box;
    border-bottom: 2px solid transparent;
  }

  .apps .open {
    border-color: #75b5e5;
  }

  .apps .active {
    background: #52646b;
  }

  .tray {
    display: flex;
    align-items: center;
    margin-left: auto;
    padding-right: 23px;
    white-space: nowrap;
  }

  .weather {
    margin: 0 23px 0 6px;
    font-size: 15px;
  }

  .lang {
    margin: 0 16px 0 13px;
    font-size: 20px;
  }

  .tray time {
    margin-right: 16px;
    font-size: 12px;
    line-height: 20px;
    text-align: center;
  }
</style>
